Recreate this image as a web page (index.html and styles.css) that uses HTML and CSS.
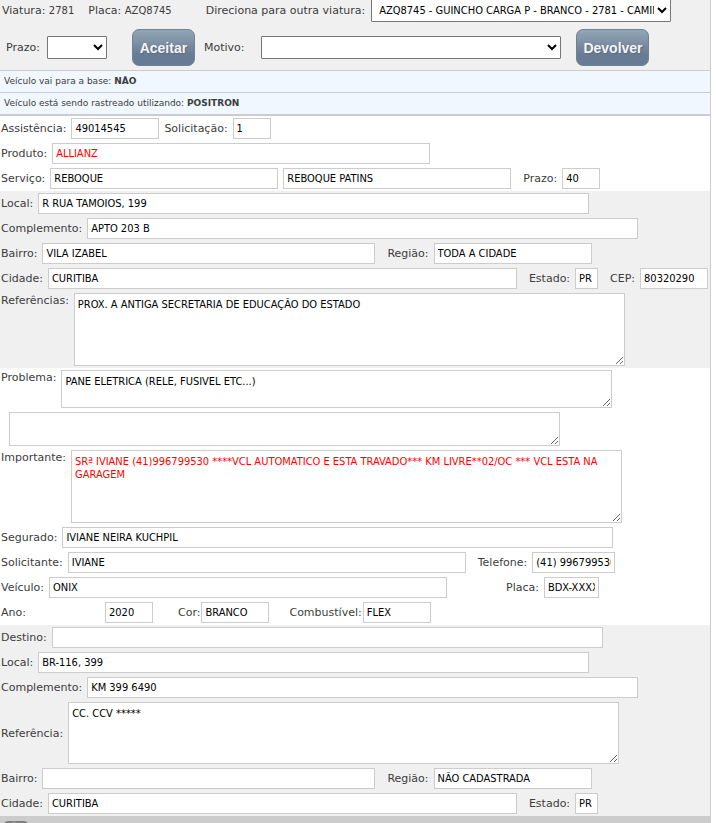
FILE: index.html
```html
<!DOCTYPE html>
<html lang="pt-BR">
<head>
  <meta charset="UTF-8">
  <meta name="viewport" content="width=device-width, initial-scale=1.0">
  <title>Atendimento</title>
  <link rel="stylesheet" href="styles.css">
</head>
<body>
  <div class="painel">
    <header class="topo">
      <div class="topo-viatura">
        <span>Viatura: <small>2781</small></span>
        <span>Placa: <small>AZQ8745</small></span>
        <label class="direciona" for="outra-viatura">Direciona para outra viatura:</label>
        <select id="outra-viatura" class="select-largo">
          <option>AZQ8745 - GUINCHO CARGA P - BRANCO - 2781 - CAMINHAO</option>
        </select>
      </div>
      <div class="topo-acoes">
        <label for="prazo-resposta">Prazo:</label>
        <select id="prazo-resposta" class="select-curto">
          <option></option>
        </select>
        <button type="button" class="botao aceitar">Aceitar</button>
        <label class="rotulo-motivo" for="motivo">Motivo:</label>
        <select id="motivo" class="select-largo motivo">
          <option></option>
        </select>
        <button type="button" class="botao devolver">Devolver</button>
      </div>
    </header>

    <p class="aviso">Veículo vai para a base: <b>NÃO</b></p>
    <p class="aviso ultimo">Veículo está sendo rastreado utilizando: <b>POSITRON</b></p>

    <form>
      <section class="bloco">
        <div class="linha">
          <label for="assistencia">Assistência:</label>
          <input id="assistencia" class="w88" type="text" value="49014545">
          <label for="solicitacao">Solicitação:</label>
          <input id="solicitacao" class="w38" type="text" value="1">
        </div>
        <div class="linha">
          <label for="produto">Produto:</label>
          <input id="produto" class="w378 alerta" type="text" value="ALLIANZ">
        </div>
        <div class="linha">
          <label for="servico">Serviço:</label>
          <input id="servico" class="w228" type="text" value="REBOQUE">
          <input class="w228" type="text" value="REBOQUE PATINS" aria-label="Tipo de serviço">
          <label class="espaco" for="prazo">Prazo:</label>
          <input id="prazo" class="w38" type="text" value="40">
        </div>
      </section>

      <section class="bloco cinza">
        <div class="linha">
          <label for="local">Local:</label>
          <input id="local" class="w551" type="text" value="R RUA TAMOIOS, 199">
        </div>
        <div class="linha">
          <label for="complemento">Complemento:</label>
          <input id="complemento" class="w551" type="text" value="APTO 203 B">
        </div>
        <div class="linha">
          <label for="bairro">Bairro:</label>
          <input id="bairro" class="w333" type="text" value="VILA IZABEL">
          <label class="espaco" for="regiao">Região:</label>
          <input id="regiao" class="w158" type="text" value="TODA A CIDADE">
        </div>
        <div class="linha">
          <label for="cidade">Cidade:</label>
          <input id="cidade" class="w469" type="text" value="CURITIBA">
          <label class="espaco" for="estado">Estado:</label>
          <input id="estado" class="w23" type="text" value="PR">
          <label class="espaco" for="cep">CEP:</label>
          <input id="cep" class="w68" type="text" value="80320290">
        </div>
        <div class="linha alto">
          <label for="referencias">Referências:</label>
          <textarea id="referencias" class="w551 h73">PROX. A ANTIGA SECRETARIA DE EDUCAÇÃO DO ESTADO</textarea>
        </div>
      </section>

      <section class="bloco">
        <div class="linha alto">
          <label for="problema">Problema:</label>
          <textarea id="problema" class="w551 h38">PANE ELETRICA (RELE, FUSIVEL ETC...)</textarea>
        </div>
        <div class="linha recuo">
          <textarea class="w551 h34" aria-label="Observação"></textarea>
        </div>
        <div class="linha alto">
          <label for="importante">Importante:</label>
          <textarea id="importante" class="w551 h73 alerta">SRª IVIANE (41)996799530 ****VCL AUTOMATICO E ESTA TRAVADO*** KM LIVRE**02/OC *** VCL ESTA NA GARAGEM</textarea>
        </div>
        <div class="linha">
          <label for="segurado">Segurado:</label>
          <input id="segurado" class="w551" type="text" value="IVIANE NEIRA KUCHPIL">
        </div>
        <div class="linha">
          <label for="solicitante">Solicitante:</label>
          <input id="solicitante" class="w398" type="text" value="IVIANE">
          <label class="espaco" for="telefone">Telefone:</label>
          <input id="telefone" class="w83" type="text" value="(41) 996799530">
        </div>
        <div class="linha">
          <label for="veiculo">Veículo:</label>
          <input id="veiculo" class="w398" type="text" value="ONIX">
          <label class="placa" for="placa">Placa:</label>
          <input id="placa" class="w55" type="text" value="BDX-XXXX">
        </div>
        <div class="linha junto">
          <label class="ano" for="ano">Ano:</label>
          <input id="ano" class="w48" type="text" value="2020">
          <label class="cor" for="cor">Cor:</label>
          <input id="cor" class="w68" type="text" value="BRANCO">
          <label for="combustivel">Combustível:</label>
          <input id="combustivel" class="w68" type="text" value="FLEX">
        </div>
      </section>

      <section class="bloco cinza">
        <div class="linha">
          <label for="destino">Destino:</label>
          <input id="destino" class="w551" type="text">
        </div>
        <div class="linha">
          <label for="destino-local">Local:</label>
          <input id="destino-local" class="w551" type="text" value="BR-116, 399">
        </div>
        <div class="linha">
          <label for="destino-complemento">Complemento:</label>
          <input id="destino-complemento" class="w551" type="text" value="KM 399 6490">
        </div>
        <div class="linha">
          <label for="destino-referencia">Referência:</label>
          <textarea id="destino-referencia" class="w551 h62">CC. CCV *****</textarea>
        </div>
        <div class="linha">
          <label for="destino-bairro">Bairro:</label>
          <input id="destino-bairro" class="w333" type="text">
          <label class="espaco" for="destino-regiao">Região:</label>
          <input id="destino-regiao" class="w158" type="text" value="NÃO CADASTRADA">
        </div>
        <div class="linha">
          <label for="destino-cidade">Cidade:</label>
          <input id="destino-cidade" class="w469" type="text" value="CURITIBA">
          <label class="espaco" for="destino-estado">Estado:</label>
          <input id="destino-estado" class="w23" type="text" value="PR">
        </div>
      </section>
    </form>

    <footer class="rodape">
      <svg width="24" height="24" viewBox="0 0 24 24" aria-hidden="true">
        <rect width="24" height="24" rx="4" fill="#808080"/>
        <circle cx="10" cy="4" r="3" fill="#a0a0a0"/>
      </svg>
    </footer>
  </div>
</body>
</html>
```

FILE: styles.css
```css
* {
  box-sizing: border-box;
}
html {
  overflow: hidden;
}
body {
  margin: 0;
  background-color: #fff;
  color: #3c3c3c;
  font-family: "DejaVu Sans", Verdana, sans-serif;
  font-size: 11px;
  line-height: 15px;
}
.painel {
  margin-right: 5px;
  border-right: 1px solid #ccc;
  white-space: nowrap;
}

/* topo */
.topo {
  background-color: #f0f0f0;
  border-bottom: 1px solid #ccc;
  padding-bottom: 4px;
}
.topo-viatura {
  display: flex;
  align-items: center;
  gap: 14px;
  margin-top: -1px;
  padding-left: 2px;
}
.topo-viatura small {
  font-size: 10px;
}
.topo-viatura .direciona {
  margin-left: 20px;
  margin-right: -8px;
}
.topo-acoes {
  display: flex;
  align-items: center;
  gap: 7px;
  padding: 7px 0 0 6px;
}
select {
  height: 23px;
  padding-left: 3px;
  border: 1px solid #767676;
  border-radius: 1px;
  background-color: #fff;
  color: #000;
  font-family: "DejaVu Sans Condensed", Tahoma, sans-serif;
  font-size: 11px;
}
.select-largo {
  width: 300px;
}
.select-curto {
  width: 60px;
}
.rotulo-motivo {
  margin-left: 2px;
}
.motivo {
  margin-left: 10px;
  margin-right: 8px;
}
.botao {
  height: 37px;
  padding: 0;
  border: 1px solid #6d8292;
  border-radius: 7px;
  background: linear-gradient(#93a6b6, #687b94 70%);
  color: #f4f4f4;
  font-family: "Liberation Sans", Arial, sans-serif;
  font-size: 14px;
  font-weight: bold;
  text-shadow: 1px 1px 1px #5a6a80;
  cursor: pointer;
}
.aceitar {
  width: 63px;
  margin-left: 18px;
}
.devolver {
  width: 73px;
}

/* avisos */
.aviso {
  margin: 0;
  padding: 3px 4px;
  background-color: #f0f7ff;
  border-bottom: 1px solid #ccc;
  font-size: 9px;
}
.ultimo {
  border-bottom-width: 2px;
}

/* formulario */
.cinza {
  background-color: #f0f0f0;
}
.linha {
  display: flex;
  align-items: center;
  gap: 5px;
  padding: 2px 0 2px 1px;
}
.alto {
  align-items: flex-start;
}
.recuo {
  padding-left: 9px;
}
.espaco {
  margin-left: 7px;
}
.placa {
  margin-left: 54px;
}
.junto {
  gap: 1px;
}
.junto label {
  margin-left: 19px;
}
.junto .ano {
  width: 103px;
  margin-left: 0;
}
.junto .cor {
  margin-left: 24px;
}
input,
textarea {
  margin: 0;
  border: 1px solid #ccc;
  background-color: #fff;
  color: #000;
  font-family: "DejaVu Sans Condensed", Tahoma, sans-serif;
  font-size: 11px;
}
input {
  height: 21px;
  padding: 0 3px;
}
textarea {
  padding: 4px 3px;
  line-height: 13px;
}
.alerta {
  color: #f00;
}
.w23 { width: 23px; }
.w38 { width: 38px; }
.w48 { width: 48px; }
.w55 { width: 55px; }
.w68 { width: 68px; }
.w83 { width: 83px; }
.w88 { width: 88px; }
.w158 { width: 158px; }
.w228 { width: 228px; }
.w333 { width: 333px; }
.w378 { width: 378px; }
.w398 { width: 398px; }
.w469 { width: 469px; }
.w551 { width: 551px; }
.h34 { height: 34px; }
.h38 { height: 38px; }
.h62 { height: 62px; }
.h73 { height: 73px; }

.rodape {
  padding: 5px 4px;
  background-color: #ccc;
}
```
